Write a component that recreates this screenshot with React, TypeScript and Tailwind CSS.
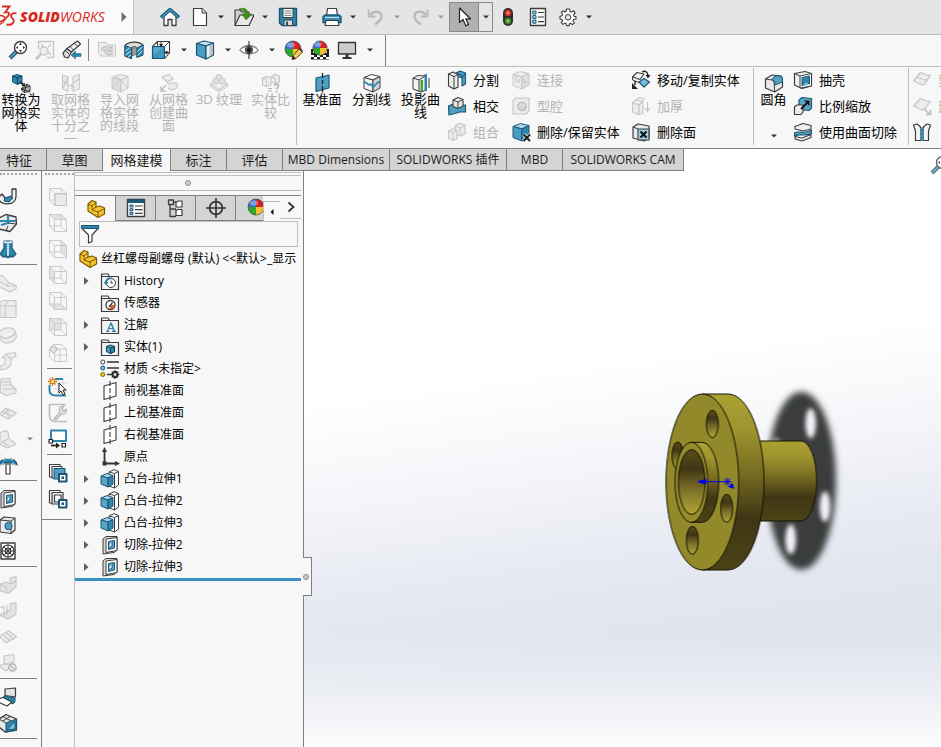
import { memo, type ReactNode } from "react";

const K = "#3d3d3d"; // outline
const B = "#2f86ad"; // blue fill
const L = "#7dbbd8"; // light blue
const D = "#1b5675"; // dark blue
const G = "#c6c6c6"; // disabled outline
const E = "#ececec"; // disabled fill

type PProps = { d: string; f?: string; s?: string; w?: number };

const P = ({ d, f = "none", s = K, w = 1 }: PProps) => (
  <path d={d} fill={f} stroke={s} strokeWidth={w} strokeLinejoin="round" />
);

type CubeProps = { s?: string; t?: string; l?: string; r?: string };

const Cube = ({ s = K, t = "#fff", l = "#e4e4e4", r = "#d4d4d4" }: CubeProps) => (
  <>
    <P d="M2 4.5 9.5 1.5 18 3.5 11 7Z" f={t} s={s} />
    <P d="M2 4.5 11 7V19L2 15.5Z" f={l} s={s} />
    <P d="M11 7 18 3.5V15L11 19Z" f={r} s={s} />
  </>
);

const Ball = () => (
  <>
    <path d="M10 9V1A8 8 0 0 0 2 9Z" fill="#3b6fd6" />
    <path d="M10 9V1A8 8 0 0 1 18 9Z" fill="#d3222a" />
    <path d="M10 9H2A8 8 0 0 0 10 17Z" fill="#2fa52c" />
    <path d="M10 9H18A8 8 0 0 1 10 17Z" fill="#f2c230" />
    <circle cx="10" cy="9" r="8" fill="none" stroke="#444" strokeWidth=".7" />
    <ellipse cx="8" cy="5" rx="4" ry="2.5" fill="#fff" opacity=".35" />
  </>
);

const Folder = ({ children }: { children: ReactNode }) => (
  <>
    <P d="M1.5 18.5V3H8L9.5 5.5H18.5V18.5Z" f="#f3f3f3" w={1.2} />
    <P d="M2 5.5H10" w={1} />
    {children}
  </>
);

// wireframe box with one highlighted face
const wire = (face: string) => (
  <>
    <path d={face} fill="#e2e2e2" />
    <P d="M1.5 1.5H13V13H1.5ZM6.5 6.5H18.5V18.5H6.5ZM1.5 1.5 6.5 6.5M13 1.5 18.5 6.5M1.5 13 6.5 18.5M13 13 18.5 18.5" s="#cbcbcb" />
  </>
);

const plane = (
  <>
    <P d="M4 5 16 1.5V15L4 18.5Z" f="#fff" w={1.1} />
    <P d="M10 0V5M10 7V12M10 14V19" w={1.1} />
  </>
);

const boss = (
  <>
    <P d="M9 3 14 .7 18.5 2.5V16L14.5 19 9 17Z" f="#fff" />
    <P d="M14.500 4.500V19M9 3 14.500 4.500 18.500 2.500" />
    <P d="M1 7 7 4.500 13 6.500 8 9Z" f="#a6d3e8" s={D} />
    <P d="M1 7 8 9V18L1 15Z" f="#5aa6c9" s={D} />
    <P d="M8 9 13 6.500V15L8 18Z" f={B} s={D} />
  </>
);

const cut = (
  <>
    <P d="M3 4 6 1.5H17V15L14 17.5 3 19Z" f="#d9d9d9" />
    <P d="M6 4 17 2.5V15.5L6 17.5Z" f="#fff" />
    <P d="M8.5 6.5 14.5 5.5V13L8.5 14.5Z" f="#5aa6c9" s={D} />
    <P d="M8.5 12.5 12 11.5V6" f="#fff" s={D} />
  </>
);

const part = (
  <>
    <P d="M2 5 6 1.5 10 3V8L14 7 18.5 9V15L12 18.5 2 12Z" f="#f4c430" s="#7a5a00" w={1.2} />
    <P d="M2 5 6 7V11L12 13V18M6 7 10 3M6 11 10 8M12 13 18.5 9.5" s="#7a5a00" />
  </>
);

const icons: Record<string, ReactNode> = {
  home: (
    <>
      <P d="M4 9V18.5H8V12.5H12V18.5H16V9L10 4Z" f="#fff" w={1.3} />
      <P d="M1 10.5 10 2.5 19 10.5" s={D} w={3.4} />
      <P d="M1.5 10.3 10 2.8 18.5 10.3" s="#4ba0c8" w={1.2} />
    </>
  ),
  doc: (
    <>
      <P d="M3.5 1.5H12L16.5 6V18.5H3.5Z" f="#fff" w={1.2} />
      <P d="M12 1.5V6H16.5" f="#ddd" />
    </>
  ),
  open: (
    <>
      <P d="M1 18V3H6L8 5H15V18Z" f="#cfcfcf" w={1.2} />
      <P d="M1 18.5 6 8H20L15 18.5Z" f="#e9e9e9" w={1.2} />
      <path d="M5 2C10 0 14 2 14 7H18L12 13 8 7H11C11 4 9 3 5 2Z" fill="#3c9410" stroke="#2a6b08" strokeWidth=".5" />
    </>
  ),
  save: (
    <>
      <P d="M1.5 1.5H18.5V18.5H4L1.5 16Z" f={B} s={D} w={1.4} />
      <P d="M5 1.5H15V10.5H5Z" f="#fff" />
      <P d="M6.5 4H13.5M6.5 6.2H13.5M6.5 8.4H13.5" s="#777" />
      <P d="M6 13H14.5V18.5H6Z" f="#ddd" />
      <path d="M8 14.5H10V18H8Z" fill={D} />
    </>
  ),
  print: (
    <>
      <P d="M4.5 9 5.5 1.5H14.5L15.5 9Z" f="#fff" w={1.2} />
      <P d="M1 9.5 3 8H17L19 9.5V15.5H1Z" f={B} s={D} w={1.3} />
      <P d="M3 10.5H17" s="#bfe0ee" w={1.3} />
      <P d="M4 13.5H16L17 18.5H3Z" f="#fff" w={1.2} />
    </>
  ),
  undo: (
    <>
      <P d="M4 8C8 3 15 4 15.5 9 15.5 13 13 15 9 17.5" s="#b9b9b9" w={2.4} />
      <path d="M2.5 2.500V9.500H9.500" fill="none" stroke="#b9b9b9" strokeWidth="1.800" />
    </>
  ),
  redo: (
    <>
      <P d="M16 8C12 3 5 4 4.5 9 4.5 13 7 15 11 17.5" s="#b9b9b9" w={2.4} />
      <path d="M17.500 2.500V9.500H10.500" fill="none" stroke="#b9b9b9" strokeWidth="1.800" />
    </>
  ),
  cursor: <P d="M5.5 1V15.5L9 12.5 11.7 18.8 14.5 17.6 11.8 11.8H16.5Z" f="#fff" s="#222" w={1.2} />,
  traffic: (
    <>
      <rect x="5" y="1" width="10" height="18" rx="5" fill="#2e2e2e" />
      <circle cx="10" cy="6" r="3.2" fill="#d92e1c" />
      <circle cx="10" cy="14" r="3.2" fill="#3c8f1e" />
      <path d="M10 4.5V7.500M8.500 6H11.500M10 12.500V15.500M8.500 14H11.500" stroke="#fff" strokeOpacity=".7" strokeWidth=".8" />
    </>
  ),
  list: (
    <>
      <P d="M2.5 1.5H17.5V18.5H2.5Z" f="#fff" w={1.4} />
      <P d="M4.8 4H8V7H4.8ZM4.8 8.6H8V11.6H4.8ZM4.8 13.2H8V16.2H4.8Z" f="#9fd0e6" s={D} />
      <P d="M10 5.5H16M10 10H16M10 14.7H16" w={1.2} />
    </>
  ),
  gear: (
    <>
      <P
        d="M8.4 2H11.6L12 4.4 13.6 5.1 15.5 3.7 17.2 6 15.6 7.7 16 9.2 18 9.6V12L15.7 12.4 15 14 16.4 16 14.4 17.6 12.6 16.2 11.4 16.7 11.2 18.6H8.6L8.2 16.7 6.8 16.1 5 17.4 3.2 15.6 4.6 13.9 4 12.4 2 12V9.2L4 8.7 4.6 7.2 3.3 5.3 5.2 3.7 6.9 5 8.1 4.4Z"
        f="#fff"
        w={1.1}
      />
      <circle cx="10" cy="10.3" r="2.8" fill="#e6e6e6" stroke={K} />
    </>
  ),
  zoomFit: (
    <>
      <P d="M2 18 8.5 11.5" s={D} w={4} />
      <P d="M2.5 17.5 8 12" s="#5aa6c9" w={1.6} />
      <circle cx="12.5" cy="7.5" r="6" fill="#fff" stroke={K} strokeWidth="1.4" />
      <path d="M12.5 2.8 14 5H11ZM12.5 12.2 11 10H14ZM8 7.5 10 6V9ZM17 7.5 15 6V9Z" fill="#222" />
    </>
  ),
  zoomArea: (
    <>
      <P d="M3.5 9V1.5H18.5V17.5H12" s={G} w={1.4} />
      <P d="M6 4 9 7M16 4 13 7M16 15 13 12" s={G} w={1.4} />
      <circle cx="9" cy="11" r="4" fill="#eee" stroke={G} strokeWidth="1.4" />
      <P d="M1 19 6 14" s={G} w={2.6} />
    </>
  ),
  prevView: (
    <>
      <P d="M1 13 5 8.5 9.5 12 6 18 2.5 17Z" f="#ddd" w={1.2} />
      <P d="M5 8.5 15.5 1 18.500 4 9.500 12Z" f="#f4f4f4" w={1.2} />
      <P d="M8 6.500 11.500 10M12.500 3.500 16 6.500M4 11 7 14" />
      <path d="M9 15 13.500 11V13.500H19V16.500H13.500V19Z" fill={B} stroke={D} strokeWidth=".5" />
    </>
  ),
  rotateBox: (
    <>
      <P d="M1.5 2.5H9L11.5 5H18.5V16H4L1.5 13Z" f={E} s={G} />
      <P d="M5 11C4 7 10 5 13 8L15 6.5V11.5H10.5L12 10C9 8.5 7.5 10 8 12.5 10 15 13 15 16 13" f="#ddd" s="#bdbdbd" w={1.2} />
    </>
  ),
  section: (
    <>
      <P d="M1 5.5C5 1 15 1 19 5L18.500 15 13 17V8C11 6.500 9 6.500 7.500 8V18.500L1 16Z" f="#dedede" w={1.2} />
      <P d="M8 8C9 6.500 12 6.500 13 8V14L8 16Z" f="#9a9a9a" s="#777" />
      <P d="M1 5.500 7.500 8V18.500L1 16Z" f={B} s={D} />
      <P d="M13 8 19 5V15L13 17.500Z" f={B} s={D} />
      <P d="M1.5 11 6 7.500M1.500 15 7 11M4 17 7 15M13.500 11.500 18.500 7M13.500 15.500 18.500 11" s="#cfe8f3" />
    </>
  ),
  orient: (
    <>
      <P d="M1.5 6.5 6.5 1.5H18.5V13L13.5 18.5" f="#fff" w={1.1} />
      <P d="M6.5 1.5V6.5M13.5 6.5 18.5 1.5M10 1V6M13.5 12.5H19" w={1} />
      <path d="M1.5 6.5H13.5V18.5H1.5Z" fill="#3f97bf" stroke={D} strokeWidth="1.2" />
      <path d="M2.5 7.5H12.5L2.5 14Z" fill="#75b9d8" opacity=".6" />
      <path d="M10 7.5 8 4H12ZM13 12.5 16.5 10.5V14.5Z" fill="#222" />
    </>
  ),
  display: (
    <>
      <P d="M1.5 3.500 9 1 18.500 3 11 6Z" f="#c4e2ef" s={D} w={1.200} />
      <P d="M1.500 3.500 11 6V19L1.500 15Z" f="#4a9cc2" s={D} w={1.200} />
      <P d="M11 6 18.500 3V15L11 19Z" f="#e4f1f7" s={D} w={1.200} />
      <path d="M14.500 5V16.500L18 14.500V3.500Z" fill="#a3a3a3" opacity=".6" />
    </>
  ),
  eye: (
    <>
      <P d="M.8 10C5 4.5 15 4.5 19.2 10 15 15.2 5 15.2.8 10Z" f="#fff" s="#888" w={1.2} />
      <path d="M1 9.5C5 3 15 3 19 9.5 15 5.8 5 5.8 1 9.5Z" fill="#888" />
      <circle cx="10" cy="10" r="4.2" fill="#555" />
      <circle cx="10" cy="10" r="2" fill="#111" />
      <path d="M10 1V19" stroke="#222" />
    </>
  ),
  appearance: (
    <>
      <Ball />
      <P d="M9 19.500 10 15.500 16 9 19.500 12 13 18.500Z" f="#f3cf5e" s="#4b3908" />
      <path d="M9 19.500 10 15.500 13 18.500ZM16 9 17 8 20 10.800 19.300 12Z" fill="#333" />
    </>
  ),
  scene: (
    <>
      <path d="M1 9H19V19.5H1Z" fill="#222" />
      <path d="M3 11H6V13H3ZM14 11H17V13H14ZM1 15H4V17H1ZM7 15H10V17H7ZM13 15H16V17H13ZM4 17H7V19H4ZM10 17H13V19H10ZM16 17H19V19H16Z" fill="#fff" />
      <g transform="translate(1 0) scale(.9)">
        <Ball />
      </g>
    </>
  ),
  monitor: (
    <>
      <P d="M1.5 2.5H18.5V14H1.5Z" f="#c9cdd0" s="#333" w={1.3} />
      <path d="M8.5 14.5H11.5V17H14.5V19H5.5V17H8.5Z" fill="#333" />
    </>
  ),
  toMesh: (
    <>
      <P d="M1.5 3 6 1.5 11 3V9.5L6.5 11.5 1.5 9Z" f={B} s={D} />
      <P d="M1.5 3 6.5 5V11.5M6.5 5 11 3" s="#0f3b52" />
      <P d="M9 9 13 12" s="#222" w={1.6} />
      <path d="M14.5 13.5 10.5 13 13.5 9.8Z" fill="#222" />
      <P d="M10 16 16 11 19 13V18.5L13 19.5Z" f="#bbb" s="#333" />
      <P d="M10 16 19 18.5M16 11 13 19.5M19 13 10 16" s="#333" />
    </>
  ),
  meshTenth: (
    <>
      <P d="M1.5 2 7 4V18.5L1.5 16ZM12 4 18.5 1.5V16L12 18.5Z" f={E} s={G} />
      <P d="M1.5 8 7 11M7 4 1.5 16M12 10 18.5 6M7 13H11M10 11 12.5 13.5 10 16" s={G} w={1.1} />
    </>
  ),
  importMesh: (
    <>
      <Cube s={G} t={E} l="#dedede" r={E} />
      <P d="M2 15 11 7 18 15M6 3.5 11 7" s={G} />
    </>
  ),
  fromMesh: (
    <>
      <P d="M3 4 10 1.5 14 6 8 9ZM8 9C8 13 18 7 18.5 12 18 17 12 18 9 15" f={E} s={G} w={1.1} />
      <P d="M7 12 2 18M2 13.5V18H7" s="#bdbdbd" w={1.4} />
    </>
  ),
  texture: (
    <>
      <P d="M1.5 11 10 7.5 18.5 11 10 17Z" f={E} s={G} w={1.1} />
      <P d="M1.5 11V13.5L10 19 18.5 13.5V11" s={G} />
      <P d="M4 9V6.5L7 5 10 6.5V9.5L7 11ZM10 9V6.5L13 5 16 6.5V9.5L13 11ZM7 5V3L10 1.5 13 3V5" f="#e2e2e2" s={G} />
    </>
  ),
  compare: (
    <>
      <P d="M1.5 5 6 3.5 10 5V12L5.5 13.5 1.5 12ZM10 4 14 1.5 18.5 3V9L14 10.5 10 9Z" f={E} s={G} w={1.1} />
      <P d="M1.5 5 5.5 6.5V13.5M10 4 14 5V10.5" s={G} />
      <P d="M7 15.5H11M7 18H11" s="#b3b3b3" w={1.2} />
      <P d="M13.5 13C13.5 10.5 18 10.5 17.5 13.2 17 15 15.5 14.8 15.5 16.5M15.5 18V19.5" s="#b3b3b3" w={1.6} />
    </>
  ),
  refPlane: (
    <>
      <P d="M4 5 17 2V15L4 18.5Z" f="#4f9fc3" s={D} w={1.2} />
      <P d="M10.5 0V5M10.5 7V11M10.5 13V19.5" s="#222" w={1.3} />
    </>
  ),
  splitLine: (
    <>
      <Cube l="#f4f4f4" />
      <P d="M2 10C4 7 6 14 8.5 11L11 14C14 13 14 8 18 9" s={B} w={1.8} />
    </>
  ),
  project: (
    <>
      <P d="M2 5 7 2.500 15 3V17L10 19 2 16Z" f="#f1f1f1" />
      <P d="M2 5 8 7V18.5M8 7 14 3" />
      <path d="M9.500 7H12V18H9.500Z" fill="#46a52a" />
      <path d="M13.500 1H16V18H13.500Z" fill={B} />
      <P d="M18 5V15" s="#555" w={1.2} />
    </>
  ),
  split: (
    <>
      <P d="M9 3 13 1 18.500 3V14L15 16V8L9.500 6Z" f="#4f9fc3" s={D} w={1.1} />
      <P d="M15 8 18.500 3M9 3 15 5V8" s={D} />
      <P d="M1.500 4 6 2 11 4.500V17L7 19 1.500 16Z" f="#ececec" w={1.1} />
      <P d="M1.500 4 7 6.500V19M7 6.500 11 4.500" />
    </>
  ),
  intersect: (
    <>
      <P d="M1.5 10 6 8 9 12 14 9 18.5 9V16L13 16 8 17.5 2 19Z" f="#4f9fc3" s={D} w={1.2} />
      <P d="M6 4 11 1.5 16 3.5V10L11 12.5 6 10.5Z" f="#e8e8e8" w={1.1} />
      <P d="M6 4 11 6 16 3.5M11 6V12" />
    </>
  ),
  combine: (
    <>
      <P d="M8 4 12 1.5 18 3V12L13 14 8 12.500Z" f={E} s={G} w={1.1} />
      <P d="M8 4 13 6V14M13 6 18 3.5" s={G} />
      <P d="M1.500 9 5 7 10 8.500V17L6 18.500 1.500 16.500Z" f={E} s={G} w={1.1} />
      <P d="M1.500 9 6 10.500V18.500M6 10.500 10 8.500" s={G} />
    </>
  ),
  join: (
    <>
      <Cube s={G} t={E} l={E} r="#e0e0e0" />
      <P d="M5 6V11L8 12V9M13 9V13L16 12" s={G} w={1.1} />
    </>
  ),
  cavity: (
    <>
      <P d="M2 4.5 5 2H18V15L15 18H2Z" f={E} s={G} w={1.1} />
      <circle cx="11" cy="10.5" r="4.2" fill="#dcdcdc" stroke="#bbb" strokeWidth="1.2" />
      <P d="M7 11C9 13 12 13 15 10" s={G} />
    </>
  ),
  deleteBody: (
    <>
      <Cube s={D} t="#a6d3e8" l="#4a9cc2" r={B} />
      <P d="M12.5 12.5 19 19M19 12.5 12.5 19" s="#fff" w={3.6} />
      <P d="M12.5 12.5 19 19M19 12.5 12.5 19" s="#222" w={2.2} />
    </>
  ),
  moveCopy: (
    <>
      <P d="M1.5 7 6 2.5 13 4 9 9.5Z" f="#f2f2f2" w={1.1} />
      <P d="M8 12 13 8.5 18.5 12 13 17Z" f={L} s={D} w={1.2} />
      <P d="M1.500 7V10L8 12.500" />
      <P d="M11 2C14 0 17 2 17 6M4 11V15" s="#222" w={1.4} />
      <path d="M14.5 5H19.5L17 8.5ZM1 13V19H7Z" fill="#222" />
    </>
  ),
  thicken: (
    <>
      <P d="M1.5 7 5 4 12 5V17L8 18.5 1.5 16Z" f={E} s={G} w={1.1} />
      <P d="M1.5 7 8 9V18.5M8 9 12 5M5 4 9 1.5 14 3M16.5 6V14M14 12 16.5 15.5 19 12" s={G} w={1.2} />
    </>
  ),
  deleteFace: (
    <>
      <P d="M2 5 7 2 18 4V16L13 19 2 16Z" f="#e8e8e8" w={1.2} />
      <P d="M7 7H18V18H7Z" f="#9fcfe4" w={1.1} />
      <P d="M2 5 7 7" />
      <P d="M9.5 9.5 15.5 15.5M15.5 9.5 9.5 15.5" s="#111" w={2.2} />
    </>
  ),
  fillet: (
    <>
      <P d="M1.5 6 8 2 17 3C19 5 18.5 8 18.5 14L10.5 19 1.5 15Z" f="#e9e9e9" w={1.2} />
      <P d="M8 6.5C9 4 11 3 14 2.5L17.5 3.5C18.5 5 18.5 7 18.5 9L11 12C11 9 10 7 8 6.5Z" f="#4f9fc3" s={D} />
      <P d="M1.5 6 8 7C10.5 8 10.5 11 10.5 19" />
    </>
  ),
  shell: (
    <>
      <P d="M1.500 3.500 12 1.500 18.500 3.500V16L9 18.500 1.500 15Z" f="#f0f0f0" w={1.2} />
      <P d="M7 6 18.500 3.500V16L7 18Z" f="#fff" w={1} />
      <P d="M9 7.500 16.500 6V14L13 12 9 16Z" f={B} s={D} />
      <path d="M9 16.500 13 12 16.500 14.500Z" fill={L} />
      <P d="M1.500 3.500 7 6" />
    </>
  ),
  scale: (
    <>
      <P d="M6 4 9 1.5 18.5 2.5V12L16 14.5 6 13.5Z" f="#5aa6c9" s={D} w={1.2} />
      <P d="M1.5 11 4 9H10V16L8 18.5H1.5Z" f="#eee" w={1.2} />
      <P d="M8 13 14.5 6.5" s="#111" w={1.8} />
      <path d="M16.5 4.5V10L11 4.5Z" fill="#111" />
    </>
  ),
  surfCut: (
    <>
      <P d="M2 4.5 10 1.5 18 3.5V7L10 9 2 7Z" f="#eee" w={1.1} />
      <P d="M1.5 11C6 8 10 13 18.5 8V11.5C12 15 8 11 1.5 14Z" f="#4f9fc3" s={D} w={1.1} />
      <P d="M2 14.5 9 16 18 12.5V15.5L9 19 2 17Z" f="#eee" w={1.1} />
    </>
  ),
  surf1: <P d="M1.5 11 8 3C11 1.5 14 7 18.5 5L13 14C9 17 6 12 1.5 11ZM5 7C9 8 12 12 16 9" f={E} s={G} w={1.2} />,
  surf2: (
    <>
      <P d="M1.5 10 8 3C11 1.5 14 7 18.5 5L13 13C9 16 6 11 1.5 10Z" f={E} s={G} w={1.2} />
      <P d="M12 13 18 18.5M18.5 14V18.5H14" s="#bbb" w={1.6} />
    </>
  ),
  knit: (
    <>
      <P d="M1.5 3 5 2C8 4 8 4 9 6V18.5H3.5V9ZM18.5 3 15 2C12 4 12 4 11 6V18.5H16.5V9Z" f="#f5f5f5" w={1.2} />
      <P d="M10 5V19M8 7 12 9M12 7 8 9M8 11 12 13M12 11 8 13M8 15 12 17M12 15 8 17" s={B} w={1.2} />
    </>
  ),
  bind: (
    <>
      <P d="M0 11C3 19 17 19 18 10V2H14V9C13 13 9 13 7 11L4 7Z" f="#f0f0f0" w={1.3} />
      <P d="M7 11 13 9 15 11 11 15 6 14Z" f={B} s={D} />
    </>
  ),
  ringBox: (
    <>
      <P d="M1 5 8 1.5 18 4 18.5 11 12 18.5 1 16Z" f="#ececec" w={1.3} />
      <P d="M1 8H18M10 2V10L3 12" s={B} w={2.2} />
      <P d="M10 10 18 11M8 18 10 13" />
    </>
  ),
  flare: (
    <>
      <P d="M6 2H14V9L18 15 15 18H12V16L10 19 8 16V18H5L2 15 6 9Z" f={B} s={D} w={1.2} />
      <P d="M6 2.5C8 4 12 4 14 2.5M10 5V17" s="#e6f4fa" w={1.6} />
    </>
  ),
  gA: <P d="M1 3 4 2 10 9 18.5 13 18 16 12 19 1 14ZM1 8 10 13 18 13M10 9V13" f={E} s={G} w={1.1} />,
  gB: <P d="M2 3 5 1.5H18V18.5H2ZM2 7H18M7 7V18.5M7 7 10 2" f={E} s={G} w={1.1} />,
  gC: <P d="M1 8C4 2 14 1 17 6L18.5 12C16 18 6 20 3 15ZM3 11C8 15 14 13 17 7M6 14 16 10" f={E} s={G} w={1.1} />,
  gD: <P d="M8 3 17 1.5 18 5 13 8V14L8 18 2 19V15L7 13V7H4Z M8 3 13 8" f={E} s={G} w={1.1} />,
  gE: <P d="M3 2 12 1.5 13 8 18 12V16L8 18.5 2 15ZM5 8 13 8M4 12 18 12M3 5H12" f={E} s={G} w={1.1} />,
  gF: <P d="M1 11 8 5 18.5 10 10 16ZM4 9 14 13M10 16V7L4 13" f={E} s={G} w={1.1} />,
  gG: <P d="M2 4 7 1.5 10 3 11 10 17 14V16L9 19 2 15ZM4 13 10 10M4 13 11 17" f={E} s={G} w={1.1} />,
  dome: (
    <>
      <P d="M1 10C2 2 18 1 19 10L15 9C13 7 7 7 5 9Z" f={B} s={D} w={1.3} />
      <P d="M1 11 6 8M19 11 14 8M5 5C8 3 12 3 15 5" s="#e6f4fa" />
      <P d="M8 9H12V19H8Z" f="#fff" w={1.2} />
    </>
  ),
  hole: (
    <>
      <P d="M2 5 6 2 17 3V15L13 18.5 2 17Z" f="#eaeaea" w={1.2} />
      <P d="M2 5 13 6V18.5M13 6 17 3" />
      <ellipse cx="10.500" cy="11" rx="3.6" ry="3.8" fill="#4f9fc3" stroke={D} />
    </>
  ),
  vent: (
    <>
      <P d="M3 2H17V18H3Z" f="#fff" w={1.4} />
      <circle cx="10" cy="10" r="6" fill="none" stroke={K} strokeWidth="1.2" />
      <circle cx="10" cy="10" r="2.8" fill="none" stroke={K} strokeWidth="1.1" />
      <P d="M10 3V17M3 10H17M5 5 15 15M15 5 5 15" />
    </>
  ),
  gH: <P d="M2 9 8 7 12 9V3L18 1.5V12L10 18.5 2 16ZM2 9 8 12V17M12 9 18 6" f="#e2e2e2" s={G} w={1.1} />,
  gI: <P d="M1 14 12 9V3L18 1.5V13L10 18ZM6 6V15M9 4V14M2 6H7" f="#e2e2e2" s={G} w={1.1} />,
  gJ: <P d="M1 9 11 4 18.5 10 8 16ZM4 7.5 12 13.5M8 5.5 15 11.5" f={E} s={G} w={1.1} />,
  gK: (
    <>
      <P d="M6 3 16 1.5V9L6 11ZM1 13 6 11 14 12 8 18Z" f={E} s={G} w={1.1} />
      <circle cx="14.5" cy="14.5" r="3.6" fill="#eee" stroke="#bbb" strokeWidth="1.6" />
      <P d="M12 12 17 17" s="#bbb" w={1.4} />
    </>
  ),
  laptop: (
    <>
      <P d="M7 2 17.5 1V10L7 8.5Z" f="#e3e3e3" w={1.2} />
      <P d="M6 9 17 11V15L15 17 5 11Z" f={B} s={D} />
      <P d="M0 12 5 10.5 14 15 9 19 0 15Z" f="#fff" w={1.2} />
    </>
  ),
  weldBox: (
    <>
      <P d="M1 6 8 1.5 18.5 6V17L7 19 1 14Z" f="#e6e6e6" w={1.3} />
      <P d="M8 10 18.5 6V17L8 19Z" f={B} s={D} />
      <P d="M9 17 17 8V16Z" f={L} s={D} />
      <P d="M1 6 8 10M5 3.5 13 8M5 8 12 3.5" />
    </>
  ),
  w1: (
    <>
      {wire("M0 0Z")}
      <path d="M7 7H18.5V18.5H7Z" fill="#eaeaea" stroke="#c4c4c4" />
    </>
  ),
  w2: wire("M1.5 1.5H13L18.5 6.5H6.5Z"),
  w3: wire("M13 1.5 18.5 6.5V18.5L13 13Z"),
  w4: wire("M1.5 1.5 6.5 6.5V18.5L1.5 13Z"),
  w5: wire("M1.5 13H13L18.5 18.5H6.5Z"),
  w6: wire("M1.5 1.5H13V13H1.5Z"),
  w7: (
    <>
      <P d="M5 1.5H13L18.5 6V18.5H6.5L1.5 14V6ZM18.5 6H10L6.5 10V18.5M10 6 5 1.5M12 6V18M6.5 12H18" s="#cbcbcb" />
      <P d="M1.5 7 5 3 9 6 6 10Z" f="#e4e4e4" s="#bbb" />
    </>
  ),
  sketch: (
    <>
      <P d="M10 1V19M15 1V19M5 6H19M5 12H19" s="#dadada" />
      <P d="M7 2H15M1.5 8V13C1.5 17 4 18.5 8 18.5H18" s={B} w={2} />
      <path d="M4.5 0V9M0 4.5H9M1.5 1.5 7.5 7.5M7.5 1.5 1.5 7.5" stroke="#d9761a" strokeWidth="1.3" />
      <circle cx="4.5" cy="4.5" r="1.5" fill="#ffe27a" />
      <P d="M11 6V16L13 14 15 18 17 17 15 13.2H18Z" f="#fff" s="#222" />
    </>
  ),
  repair: (
    <>
      <P d="M18 1.5H1.5V13C1.5 17 4 18.5 8 18.5H19" s="#bdbdbd" w={1.6} />
      <P d="M6 16 12 9C10 6 12 3 16 3L14 6 16 8 18.5 6C19 10 16 12 13.5 11L8 17Z" f="#ddd" s="#b9b9b9" w={1.2} />
    </>
  ),
  convert: (
    <>
      <P d="M3 1.5H18V12H3Z" f="#fff" s={B} w={2} />
      <P d="M1 10.5H4.5V14H1ZM14 14.5H17.5V18H14Z" f="#fff" s="#222" w={1.2} />
      <P d="M3 16.5H9" s="#222" w={1.8} />
      <path d="M8 13.5 12 16.5 8 19.5Z" fill="#222" />
    </>
  ),
  stack1: (
    <>
      <P d="M1.5 1.5H12V14H1.5Z" f="#fff" w={1.1} />
      <P d="M4 3.5H14V15H4Z" f="#fff" w={1.1} />
      <P d="M6 5.5H17V16H6Z" f="#4f9fc3" s={D} w={1.1} />
      <P d="M11 11H18.5V18.5H11Z" f="#fff" s={D} w={2} />
      <path d="M13.5 13.5H16V16H13.5Z" fill={D} />
    </>
  ),
  stack2: (
    <>
      <P d="M1.5 1.5H12V14H1.5Z" f="#fff" w={1.2} />
      <P d="M4 3.5H15V15H4Z" f="#eee" w={1.2} />
      <P d="M6.5 6H13V13H6.5Z" f="#fff" w={1.2} />
      <P d="M11 11H18.5V18.5H11Z" f="#fff" s={D} w={2} />
      <path d="M13.5 13.5H16V16H13.5Z" fill={D} />
    </>
  ),
  part,
  plane,
  boss,
  cut,
  props: (
    <>
      <P d="M1.5 1.5H18.5V18.5H1.5Z" f="#fff" w={1.4} />
      <path d="M1.5 1.5H18.5V5H1.5Z" fill={D} />
      <P d="M4 7H7V9H4ZM4 10.7H7V12.7H4ZM4 14.4H7V16.4H4Z" f="#9fd0e6" s={D} />
      <P d="M9 8H16.5M9 11.7H16.5M9 15.4H16.5" w={1.2} />
    </>
  ),
  config: (
    <>
      <P d="M4 7V18.500H10M4 11H10M2.500 2H7.500V6.500H2.500Z" w={1.300} />
      <P d="M9 4H11L12 3H16V9H10V4M9 12H11L12 11.500H16V17.500H10V12" f="#fff" w={1.200} />
      <P d="M7.500 4H10" w={1.200} />
    </>
  ),
  target: (
    <>
      <circle cx="10" cy="10" r="6.4" fill="none" stroke="#333" strokeWidth="1.8" />
      <P d="M10 0V20M0 10H20" s="#333" w={1.6} />
    </>
  ),
  ball: <Ball />,
  funnel: (
    <>
      <P d="M1.5 2H18.5V4L12 11V17.5L8.5 19V11L1.5 4Z" f="#fff" w={1.2} />
      <path d="M1.5 1.5H18.5V4.5H1.5Z" fill={B} stroke={D} />
    </>
  ),
  history: (
    <Folder>
      <circle cx="11" cy="12" r="4.5" fill="#fff" stroke={K} />
      <P d="M11 9.5V12H13" />
      <P d="M12 7.5C8 6 5.5 9 6 12" s={B} w={1.8} />
      <path d="M3.5 11H8.5L6 14.5Z" fill={B} />
    </Folder>
  ),
  sensor: (
    <Folder>
      <circle cx="10.500" cy="12" r="4.500" fill="#fff" stroke={K} strokeWidth="1.3" />
      <path d="M10.500 12 15 12A4.200 4.200 0 0 1 10 16.200Z" fill="#e1572c" />
      <P d="M9 14 12.500 9.500" w={1.3} />
    </Folder>
  ),
  note: (
    <Folder>
      <path d="M6 17V16L7 15.8 10.3 7.5H11.7L15 15.8 16 16V17H12V16L13 15.8 12.5 14H9L8.4 15.8 9.5 16V17ZM9.4 13H12.2L10.8 9.4Z" fill={B} />
    </Folder>
  ),
  solids: (
    <Folder>
      <P d="M6.5 9.5 10.5 8 14.5 9.5V14.5L10.5 16.5 6.5 14.5Z" f="#4f9fc3" s={D} w={1.2} />
      <P d="M6.5 9.5 10.5 11V16.5L14.5 14.5V9.5L10.5 11" f={B} s="#123f56" />
    </Folder>
  ),
  material: (
    <>
      <circle cx="2.8" cy="3" r="2" fill="#fff" stroke={K} />
      <circle cx="2.8" cy="9" r="2" fill={L} stroke={D} />
      <circle cx="2.8" cy="15.5" r="2" fill="#f0c230" stroke="#8a6a00" />
      <P d="M7 3H19M7 9H19M7 15.5H11" s="#333" w={1.7} />
      <circle cx="15" cy="15.5" r="2.6" fill="none" stroke="#333" strokeWidth="2.2" />
      <path d="M15 11V20M10.6 15.5H19.4M12 12.5 18 18.5M18 12.5 12 18.5" stroke="#333" strokeWidth="1" />
      <circle cx="15" cy="15.5" r="1.3" fill="#f7f7f7" />
    </>
  ),
  origin: (
    <>
      <P d="M4.5 3V16.5H17" s="#333" w={1.8} />
      <path d="M4.5 0 7 5H2ZM20 16.5 15 14V19ZM2.5 14.5H6.5V18.5H2.5Z" fill="#333" />
    </>
  ),
};

const Icon = memo(({ name, className = "size-5" }: { name: string; className?: string }) => (
  <svg viewBox="0 0 20 20" className={`shrink-0 ${className}`} aria-hidden="true">
    {icons[name]}
  </svg>
));

Icon.displayName = "Icon";

const Caret = ({ className = "text-[#333]" }: { className?: string }) => (
  <svg viewBox="0 0 6 4" width="6" height="4" className={`shrink-0 ${className}`} aria-hidden="true">
    <path d="M0 .5H6L3 3.5Z" fill="currentColor" />
  </svg>
);

const titleTools = [
  { name: "home" },
  { name: "doc", menu: true },
  { name: "open", menu: true },
  { name: "save", menu: true },
  { name: "print", menu: true },
  { name: "undo", menu: true, disabled: true },
  { name: "redo", menu: true, disabled: true },
];

const viewTools = [
  { name: "section" },
  { name: "orient", menu: true },
  { name: "display", menu: true },
  { name: "eye", menu: true },
  { name: "appearance" },
  { name: "scene" },
  { name: "monitor", menu: true },
];

const Logo = () => (
  <div className="flex h-full w-[134px] shrink-0 items-center border-r border-[#c4c4c4] bg-[#fafafa]">
    <svg viewBox="0 0 18 22" className="mb-1 h-[22px] w-[18px] shrink-0" fill="none" stroke="#d9291f" strokeWidth="1.8" aria-hidden="true">
      <path d="M2 2.500H9.500L5 8.500C9 7.500 10 9.500 8 12 6 14.500 3 17 0 18" />
      <path d="M16.500 9.500C12.500 8.500 10 10.500 11.500 13 13.500 16 15 17 12.500 19.500 11 21 9 21 6.500 20.500" />
      <path d="M0 11.500C3 11.500 6 13 4.500 16 3.500 18 2 19.500 0 20.500" strokeWidth="1.300" />
    </svg>
    <span className="ml-0.5 text-sm italic leading-5 text-[#d9291f]">
      <b className="font-extrabold">SOLID</b>WORKS
    </span>
    <button aria-label="展开菜单" className="mr-1 ml-auto flex h-5 w-2 items-center">
      <svg viewBox="0 0 6 10" width="6" height="10" aria-hidden="true">
        <path d="M.5 0 5.500 5 .5 10Z" fill="#6e6e6e" />
      </svg>
    </button>
  </div>
);

const TitleBar = () => (
  <header className="flex h-[35px] shrink-0 items-center border-b border-[#bdbdbd] bg-[#e5e5e5]">
    <Logo />
    <div className="flex items-center pl-[21px]">
      {titleTools.map((tool) => (
        <div key={tool.name} className="flex h-[30px]">
          <button aria-label={tool.name} className="flex w-[30px] items-center justify-center" disabled={tool.disabled}>
            <Icon name={tool.name} />
          </button>
          {tool.menu && (
            <button aria-label={`${tool.name} 菜单`} className="flex w-3.5 items-center justify-center pr-0.5" disabled={tool.disabled}>
              <Caret className={tool.disabled ? "text-[#9a9a9a]" : "text-[#333]"} />
            </button>
          )}
        </div>
      ))}
      <div className="flex h-[30px] border border-[#8a8a8a]">
        <button aria-label="选择" className="flex w-[29px] items-center justify-center border-r border-[#8a8a8a] bg-[#b0b0b0]">
          <Icon name="cursor" />
        </button>
        <button aria-label="选择 菜单" className="flex w-[13px] items-center justify-center">
          <Caret />
        </button>
      </div>
      {["traffic", "list", "gear"].map((name) => (
        <button key={name} aria-label={name} className="flex w-[30px] items-center justify-center">
          <Icon name={name} />
        </button>
      ))}
      <button aria-label="选项 菜单" className="flex w-3.5 items-center justify-center pr-0.5">
        <Caret />
      </button>
    </div>
  </header>
);

const ViewBar = () => (
  <div className="flex h-8 shrink-0 border-b border-[#bdbdbd]">
    <div className="flex w-[386px] items-center border-r border-[#808080] pb-0.5 pl-1">
      {["zoomFit", "zoomArea", "prevView"].map((name) => (
        <button key={name} aria-label={name} className="flex w-[27px] justify-center">
          <Icon name={name} />
        </button>
      ))}
      <div className="mr-1 ml-[3px] h-[22px] w-px bg-[#808080]" />
      <button aria-label="rotate" className="flex w-[27px] justify-center" disabled>
        <Icon name="rotateBox" />
      </button>
      {viewTools.map((tool) => (
        <div key={tool.name} className="flex items-center">
          <button aria-label={tool.name} className="flex w-[27px] justify-center">
            <Icon name={tool.name} />
          </button>
          {tool.menu && (
            <button aria-label={`${tool.name} 菜单`} className="flex h-5 w-[17px] items-center justify-center pl-0.5">
              <Caret />
            </button>
          )}
        </div>
      ))}
    </div>
  </div>
);

type BigProps = { icon: string; label: string; disabled?: boolean; className?: string };

const BigButton = ({ icon, label, disabled, className = "w-[49px]" }: BigProps) => (
  <button
    disabled={disabled}
    className={`flex shrink-0 flex-col items-center pt-[6px] text-[13px] leading-[13px] disabled:text-[#b3b3b3] ${className}`}
  >
    <Icon name={icon} />
    <span className="w-[44px] px-0.5 text-center break-all">{label}</span>
  </button>
);

type SmallItem = { icon: string; label: string; disabled?: boolean; iconOnly?: boolean };

const SmallColumn = ({ items, className }: { items: SmallItem[]; className: string }) => (
  <div className={`flex shrink-0 flex-col ${className}`}>
    {items.map((item) => (
      <button
        key={item.icon}
        disabled={item.disabled}
        aria-label={item.label}
        className="flex h-[26px] items-center gap-1.5 text-[13px] leading-[18px] whitespace-nowrap disabled:text-[#b3b3b3]"
      >
        <Icon name={item.icon} />
        {!item.iconOnly && item.label}
      </button>
    ))}
  </div>
);

const Divider = () => <div className="mt-px h-[77px] w-px shrink-0 bg-[#bdbdbd]" />;

const Ribbon = () => (
  <div className="flex h-[82px] shrink-0 overflow-hidden border-b border-[#808080]">
    <BigButton icon="toMesh" label="转换为网格实体" className="w-[46px] pr-1" />
    <BigButton icon="meshTenth" label="取网格实体的十分之一" disabled />
    <BigButton icon="importMesh" label="导入网格实体的线段" disabled />
    <BigButton icon="fromMesh" label="从网格创建曲面" disabled />
    <button disabled className="flex w-[52px] shrink-0 flex-col items-center pt-[6px] text-[13px] leading-[13px] whitespace-nowrap disabled:text-[#b3b3b3]">
      <Icon name="texture" />
      3D 纹理
    </button>
    <BigButton icon="compare" label="实体比较" disabled className="w-[51px]" />
    <Divider />
    <BigButton icon="refPlane" label="基准面" className="w-[50px]" />
    <BigButton icon="splitLine" label="分割线" />
    <BigButton icon="project" label="投影曲线" />
    <SmallColumn
      className="w-[66px] pl-0.5"
      items={[
        { icon: "split", label: "分割" },
        { icon: "intersect", label: "相交" },
        { icon: "combine", label: "组合", disabled: true },
      ]}
    />
    <SmallColumn
      className="w-[120px]"
      items={[
        { icon: "join", label: "连接", disabled: true },
        { icon: "cavity", label: "型腔", disabled: true },
        { icon: "deleteBody", label: "删除/保留实体" },
      ]}
    />
    <SmallColumn
      className="w-[122px]"
      items={[
        { icon: "moveCopy", label: "移动/复制实体" },
        { icon: "thicken", label: "加厚", disabled: true },
        { icon: "deleteFace", label: "删除面" },
      ]}
    />
    <Divider />
    <div className="flex w-[39px] shrink-0 flex-col items-center">
      <BigButton icon="fillet" label="圆角" className="w-[39px]" />
      <button aria-label="圆角 菜单" className="mt-auto mb-1.5 flex h-3 w-5 items-center justify-center">
        <Caret />
      </button>
    </div>
    <SmallColumn
      className="w-[115px]"
      items={[
        { icon: "shell", label: "抽壳" },
        { icon: "scale", label: "比例缩放" },
        { icon: "surfCut", label: "使用曲面切除" },
      ]}
    />
    <Divider />
    <SmallColumn
      className="pl-[3px]"
      items={[
        { icon: "surf1", label: "剪裁曲面", disabled: true },
        { icon: "surf2", label: "延伸曲面", disabled: true },
        { icon: "knit", label: "缝合曲面", iconOnly: true },
      ]}
    />
  </div>
);

const tabs = [
  { label: "特征", width: "w-[47px] pr-2" },
  { label: "草图", width: "w-14" },
  { label: "网格建模", width: "w-[68px]", active: true },
  { label: "标注", width: "w-14" },
  { label: "评估", width: "w-14" },
  { label: "MBD Dimensions", width: "w-[107px]", latin: true },
  { label: "SOLIDWORKS 插件", width: "w-[117px]", latin: true },
  { label: "MBD", width: "w-14", latin: true },
  { label: "SOLIDWORKS CAM", width: "w-[121px]", latin: true },
];

const CommandTabs = () => (
  <div className="relative z-10 flex h-[22px] shrink-0 bg-white" role="tablist">
    {tabs.map((tab) => (
      <button
        key={tab.label}
        role="tab"
        aria-selected={!!tab.active}
        className={`shrink-0 border-r border-[#808080] text-center leading-5 whitespace-nowrap text-[#1c1c1c] ${tab.width} ${
          tab.active ? "bg-[#f7f7f7]" : "border-b bg-[#d4d4d4]"
        } ${tab.latin ? "text-xs" : "text-[13px]"}`}
      >
        {tab.label}
      </button>
    ))}
    <div className="absolute top-1.5 right-0 w-[11px] overflow-hidden">
      <Icon name="zoomFit" className="size-5 opacity-80" />
    </div>
  </div>
);

const featureGroups = [
  ["bind", "ringBox", "flare"],
  ["gA", "gB", "gC", "gD", "gE", "gF", "gG", "dome"],
  ["cut", "hole", "vent"],
  ["gH", "gI", "gJ", "gK"],
  ["laptop", "weldBox"],
];

const sketchGroups = [
  ["w1", "w2", "w3", "w4", "w5", "w6", "w7"],
  ["sketch", "repair", "convert"],
  ["stack1", "stack2"],
];

const Grip = ({ className = "" }: { className?: string }) => (
  <div className={`mt-0.5 mb-[9px] h-0 border-t-2 border-dotted border-[#a8a8a8] ${className}`} />
);

const FeatureBar = () => (
  <div className="w-[42px] shrink-0 overflow-hidden border-r border-[#808080]">
    <Grip className="mr-1" />
    {featureGroups.map((group) => (
      <div key={group[0]} className="mb-2">
        {group.map((name) => (
          <div key={name} className="flex h-[26px] items-center">
            <button aria-label={name} className="-ml-0.5">
              <Icon name={name} />
            </button>
            {name === "gG" && (
              <button aria-label="更多" className="ml-[9px] flex h-5 w-3 items-center">
                <Caret className="text-[#888]" />
              </button>
            )}
          </div>
        ))}
        <div className="mt-0.5 mr-1 -mb-[3px] h-px bg-[#808080]" />
      </div>
    ))}
  </div>
);

const SketchBar = () => (
  <div className="w-8 shrink-0 overflow-hidden">
    <Grip className="ml-[3px]" />
    {sketchGroups.map((group) => (
      <div key={group[0]} className="group mb-2">
        {group.map((name) => (
          <div key={name} className="flex h-[26px] items-center justify-center">
            <button aria-label={name}>
              <Icon name={name} />
            </button>
          </div>
        ))}
        <div className="mt-0.5 mr-0.5 -mb-[3px] ml-[5px] h-px bg-[#808080] group-last:mt-[7px] group-last:ml-0" />
      </div>
    ))}
  </div>
);

const treeItems = [
  { icon: "history", label: "History", open: true },
  { icon: "sensor", label: "传感器" },
  { icon: "note", label: "注解", open: true },
  { icon: "solids", label: "实体(1)", open: true },
  { icon: "material", label: "材质 <未指定>" },
  { icon: "plane", label: "前视基准面" },
  { icon: "plane", label: "上视基准面" },
  { icon: "plane", label: "右视基准面" },
  { icon: "origin", label: "原点" },
  { icon: "boss", label: "凸台-拉伸1", open: true },
  { icon: "boss", label: "凸台-拉伸2", open: true },
  { icon: "boss", label: "凸台-拉伸3", open: true },
  { icon: "cut", label: "切除-拉伸2", open: true },
  { icon: "cut", label: "切除-拉伸3", open: true },
];

const TreePanel = () => (
  <aside className="flex w-[229px] shrink-0 flex-col border-l border-[#bdbdbd] pr-0.5">
    <div className="mt-px h-[4px] border-y border-[#b9c3c7]" />
    <div className="flex h-[15px] items-center justify-center border-b border-[#bdbdbd]">
      <span className="size-1.5 rounded-full border border-[#8a8a8a] bg-[#d0d0d0]" />
    </div>
    <div className="mt-1 flex h-[26px] border-t border-[#808080]" role="tablist">
      <button role="tab" aria-selected="true" aria-label="特征树" className="flex w-[41px] items-center justify-center border-r border-[#808080] pl-0.5">
        <Icon name="part" />
      </button>
      {["props", "config", "target"].map((name) => (
        <button
          key={name}
          role="tab"
          aria-selected="false"
          aria-label={name}
          className="flex w-10 items-center justify-center border-r border-b border-[#808080] bg-[#d4d4d4]"
        >
          <Icon name={name} />
        </button>
      ))}
      <button role="tab" aria-selected="false" aria-label="外观" className="flex w-[27px] items-center overflow-hidden border-b border-[#808080] bg-[#d4d4d4] pl-2.5">
        <Icon name="ball" />
      </button>
      <button aria-label="向左" className="mt-[5px] flex flex-1 items-center justify-center border-t border-l border-[#bdbdbd]">
        <svg viewBox="0 0 4 6" width="4" height="6" aria-hidden="true">
          <path d="M3.500 0V6L.5 3Z" fill="#111" />
        </svg>
      </button>
      <button aria-label="向右" className="mb-0.5 flex w-[21px] items-center justify-center border-b border-[#bdbdbd]">
        <svg viewBox="0 0 8 12" width="8" height="12" aria-hidden="true">
          <path d="M1.500 1.500 6.500 6 1.500 10.500" fill="none" stroke="#333" strokeWidth="1.800" />
        </svg>
      </button>
    </div>
    <div className="mr-[3px] ml-1 flex h-[26px] items-center border border-[#bdbdbd]">
      <Icon name="funnel" />
      <input aria-label="过滤" className="h-5 min-w-0 flex-1 bg-transparent px-1 text-xs outline-none" />
    </div>
    <button className="flex h-[23px] items-center gap-[3px] overflow-hidden pl-[3px] text-xs whitespace-nowrap">
      <Icon name="part" />
      {"丝杠螺母副螺母 (默认) <<默认>_显示"}
    </button>
    <ul>
      {treeItems.map((item) => (
        <li key={item.label}>
          <button className="flex h-[22px] w-full items-center pl-2 text-xs whitespace-nowrap">
            <svg viewBox="0 0 6 8" width="6" height="8" className="mr-[11px] shrink-0" aria-hidden="true">
              {item.open && <path d="M1 0 5.500 4 1 8Z" fill="#5f5f5f" />}
            </svg>
            <Icon name={item.icon} className="mr-1 size-5" />
            {item.label}
          </button>
        </li>
      ))}
    </ul>
    <div className="h-[3px] shrink-0 bg-[#3a8fc5]" />
  </aside>
);

const FlangeNut = () => (
  <svg viewBox="0 0 660 660" className="absolute top-[199px] left-[336px] size-[220px] overflow-visible" role="img" aria-label="丝杠螺母副螺母">
    <defs>
      <linearGradient id="rim" x1="0" y1="0" x2="0" y2="1">
        <stop offset="0" stopColor="#aca132" />
        <stop offset=".2" stopColor="#9f942f" />
        <stop offset=".45" stopColor="#776c22" />
        <stop offset=".7" stopColor="#403614" />
        <stop offset="1" stopColor="#4d4318" />
      </linearGradient>
      <linearGradient id="bore" x1="0" y1="0" x2="0" y2="1">
        <stop offset="0" stopColor="#5a501b" />
        <stop offset=".3" stopColor="#403615" />
        <stop offset=".65" stopColor="#81762a" />
        <stop offset="1" stopColor="#b0a535" />
      </linearGradient>
      <filter id="soft" x="-20%" y="-20%" width="140%" height="140%">
        <feGaussianBlur stdDeviation="9" />
      </filter>
      <filter id="softHole" x="-60%" y="-30%" width="220%" height="160%">
        <feGaussianBlur stdDeviation="6" />
      </filter>
    </defs>
    <ellipse cx="484" cy="332" rx="104" ry="267" fill="#3b3c3e" filter="url(#soft)" />
    <g fill="#f2f3f8" filter="url(#softHole)">
      <ellipse cx="512" cy="160" rx="16" ry="45" />
      <ellipse cx="555" cy="410" rx="16" ry="45" />
      <ellipse cx="452" cy="508" rx="16" ry="45" />
      <ellipse cx="408" cy="232" rx="13" ry="28" opacity=".7" />
    </g>
    <g stroke="#141204" strokeWidth="3">
      <path d="M350 213H483A47 120 0 0 1 483 453H350Z" fill="url(#rim)" />
      <path d="M187 72H264A108 264 0 0 1 264 600H187Z" fill="url(#rim)" />
      <ellipse cx="187" cy="336" rx="109" ry="264" fill="#92892a" />
      <g fill="url(#bore)">
        <ellipse cx="217" cy="162" rx="18" ry="41" />
        <ellipse cx="260" cy="415" rx="18" ry="42" />
        <ellipse cx="157" cy="511" rx="18" ry="42" />
        <ellipse cx="113" cy="257" rx="17" ry="41" />
      </g>
      <path d="M154 217H186A50 120 0 0 1 186 457H154Z" fill="url(#rim)" />
      <ellipse cx="154" cy="337" rx="49" ry="120" fill="#968c2c" />
      <ellipse cx="155" cy="336" rx="40" ry="97" fill="url(#bore)" />
    </g>
    <g stroke="#0000f0" strokeWidth="3" fill="#0000f0">
      <path d="M262 335H190M262 323V347M250 335H274M253 326 271 344M271 326 253 344" />
      <path d="M174 335 197 328V342ZM281 355 266 350 277 341Z" />
    </g>
  </svg>
);

const Viewport = () => (
  <main className="relative min-w-0 flex-1 border-l border-[#808080] bg-[linear-gradient(180deg,transparent_80%,rgba(255,255,255,0.4)_91%,rgba(255,255,255,0.92)_100%),linear-gradient(172deg,#ffffff_35%,#f3f4f8_52%,#e6e9f2_66%,#dfe3ec_80%)]">
    <div className="absolute top-[386px] -left-px flex h-[39px] w-[9px] items-center border border-l-0 border-[#808080] bg-[#f7f7f7]">
      <span className="size-1.5 rounded-full border border-[#8a8a8a] bg-[#c9c9c9]" />
    </div>
    <FlangeNut />
  </main>
);

const App = () => (
  <div className="flex h-screen flex-col overflow-hidden bg-[#f7f7f7] font-['Open_Sans','Noto_Sans_CJK_SC',sans-serif] text-black">
    <TitleBar />
    <ViewBar />
    <Ribbon />
    <CommandTabs />
    <div className="flex min-h-0 flex-1">
      <FeatureBar />
      <SketchBar />
      <TreePanel />
      <Viewport />
    </div>
  </div>
);

export default App;
